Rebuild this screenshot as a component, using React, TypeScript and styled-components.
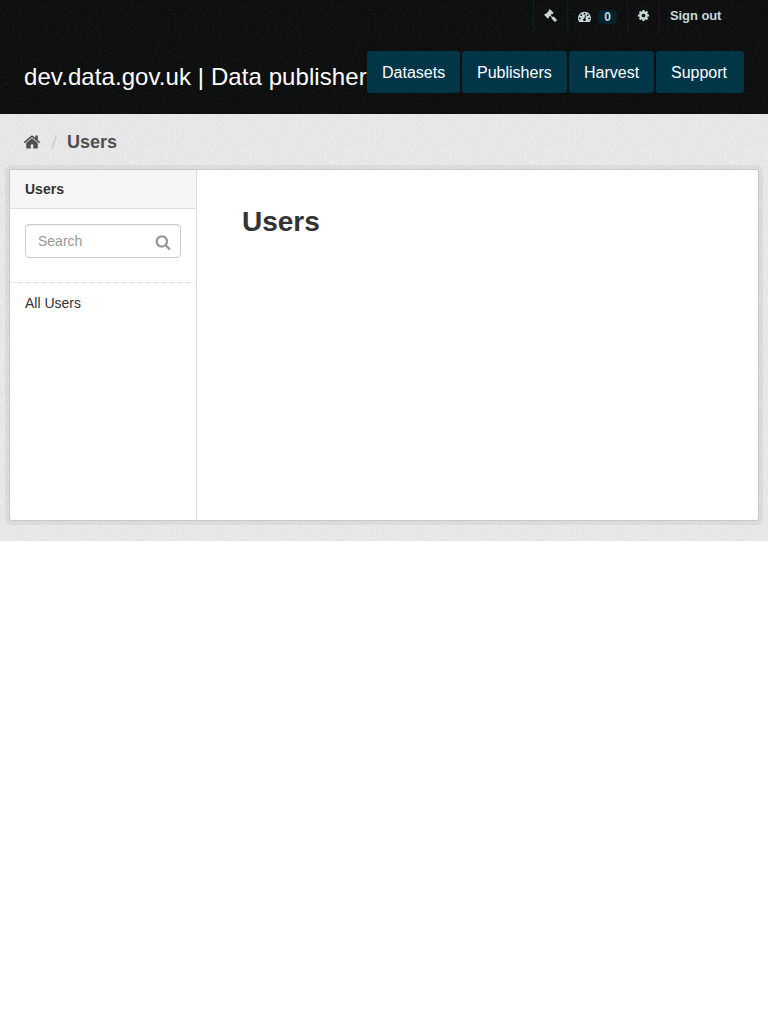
import React from "react";
import styled, { createGlobalStyle } from "styled-components";

const GlobalStyle = createGlobalStyle`
  * { box-sizing: border-box; }
  body {
    margin: 0;
    background: #fff;
    color: #333;
    font: 14px/20px "Helvetica Neue", "Liberation Sans", Arial, sans-serif;
    -webkit-font-smoothing: antialiased;
  }
  a { color: inherit; text-decoration: none; }
`;

const grain = (tone: number, alpha: number) =>
  `url("data:image/svg+xml,${encodeURIComponent(
    `<svg xmlns='http://www.w3.org/2000/svg' width='100' height='100'><filter id='n' x='0' y='0' width='100%' height='100%'><feTurbulence type='fractalNoise' baseFrequency='0.6' numOctaves='2' seed='4' stitchTiles='stitch'/><feColorMatrix values='0 0 0 0 ${tone} 0 0 0 0 ${tone} 0 0 0 0 ${tone} ${alpha} 0 0 0 ${-alpha * 0.38}'/></filter><rect width='100' height='100' filter='url(#n)'/></svg>`
  )}")`;

const Masthead = styled.header`
  height: 114px;
  background: #0b0d0d ${grain(0.3, 0.2)};
  color: #fff;
`;

const AccountBar = styled.ul`
  display: flex;
  justify-content: flex-end;
  height: 31px;
  margin: 0;
  padding: 0 37px 0 0;
  list-style: none;
  color: #c6d7db;
  font-size: 13px;
  font-weight: bold;
  line-height: 31px;
`;

const AccountItem = styled.li<{ $width: number }>`
  display: flex;
  align-items: center;
  width: ${(p) => p.$width}px;
  padding-left: 10px;
  border-left: 1px solid #04222b;
  white-space: nowrap;
  letter-spacing: -0.08px;
`;

const Badge = styled.span`
  width: 19px;
  height: 14px;
  margin: 2px 0 0 7px;
  border-radius: 4px;
  background: #00232e;
  font-size: 12px;
  line-height: 14px;
  text-align: center;
`;

const BrandRow = styled.div`
  display: flex;
  justify-content: space-between;
  padding: 20px 24px 0;
`;

const SiteTitle = styled.h1`
  width: 343px;
  margin: 11px 0 0;
  font-size: 24px;
  font-weight: normal;
  line-height: 30px;
  letter-spacing: 0.08px;
  white-space: nowrap;
`;

const MainNav = styled.nav`
  display: flex;
  gap: 2px;
`;

const NavLink = styled.a<{ $width: number }>`
  width: ${(p) => p.$width}px;
  height: 42px;
  padding-left: 15px;
  border-radius: 3px;
  background: #003647;
  font-size: 16px;
  line-height: 43px;
`;

const Main = styled.main`
  height: 427px;
  padding: 18px 10px 0;
  background: #e4e4e4 ${grain(1, 0.9)};
`;

const Breadcrumb = styled.div`
  display: flex;
  align-items: center;
  height: 20px;
  margin-bottom: 18px;
  padding-left: 13px;
  color: #505050;
  font-size: 18px;
  font-weight: bold;
`;

const Slash = styled.svg`
  width: 6px;
  height: 14px;
  margin: 0 10px 0 10px;
  fill: none;
  stroke: #ccc;
  stroke-width: 1.5;
`;

const Panel = styled.div`
  display: flex;
  height: 350px;
  border-radius: 2px;
  background: #fff;
  box-shadow: 0 0 0 1px #c8c8c8, 0 0 0 5px rgba(0, 0, 0, 0.05);
`;

const Sidebar = styled.aside`
  width: 187px;
  border-right: 1px solid #ddd;
`;

const SidebarHeading = styled.h2`
  height: 39px;
  margin: 0;
  padding-left: 15px;
  border-bottom: 1px solid #ddd;
  border-radius: 2px 0 0 0;
  background: #f6f6f6;
  font-size: 14px;
  line-height: 38px;
`;

const SearchArea = styled.div`
  height: 74px;
  padding: 15px 15px 0;
  border-bottom: 1px dotted #ddd;
`;

const SearchField = styled.label`
  display: flex;
  align-items: center;
  justify-content: space-between;
  height: 34px;
  padding: 0 9px 0 12px;
  border: 1px solid #ccc;
  border-radius: 4px;
  box-shadow: inset 0 1px 1px rgba(0, 0, 0, 0.075);
  color: #999;
`;

const FilterLink = styled.a`
  display: block;
  padding: 10px 15px;
`;

const Content = styled.section`
  padding: 34px 45px;
`;

const PageTitle = styled.h1`
  margin: 0;
  font-size: 28px;
  line-height: 35px;
`;

const Glyph = styled.svg<{ $top?: number; $left?: number }>`
  flex: none;
  margin-top: ${(p) => p.$top ?? 0}px;
  margin-left: ${(p) => p.$left ?? 0}px;
  fill: currentColor;
`;

const icons = {
  home: "M1472 992v480q0 26-19 45t-45 19h-384v-384h-256v384h-384q-26 0-45-19t-19-45v-480q0-1 .5-3t.5-3l575-474 575 474q1 2 1 6zm223-69l-62 74q-8 9-21 11h-3q-13 0-21-7l-692-577-692 577q-12 8-24 7-13-2-21-11l-62-74q-8-10-7-23.5t11-21.5l719-599q32-26 76-26t76 26l244 204v-195q0-14 9-23t23-9h192q14 0 23 9t9 23v408l219 182q10 8 11 21.5t-7 23.5z",
  search: "M1216 832q0-185-131.5-316.5t-316.5-131.5-316.5 131.5-131.5 316.5 131.5 316.5 316.5 131.5 316.5-131.5 131.5-316.5zm512 832q0 52-38 90t-90 38q-54 0-90-38l-343-342q-179 124-399 124-143 0-273.5-55.5t-225-150-150-225-55.5-273.5 55.5-273.5 150-225 225-150 273.5-55.5 273.5 55.5 225 150 150 225 55.5 273.5q0 220-124 399l343 343q37 37 37 90z",
  cog: "M1152 896q0-106-75-181t-181-75-181 75-75 181 75 181 181 75 181-75 75-181zm512-109v222q0 12-8 23t-20 13l-185 28q-19 54-39 91 35 50 107 138 10 12 10 25t-9 23q-27 37-99 108t-94 71q-12 0-26-9l-138-108q-44 23-91 38-16 136-29 186-7 28-36 28h-222q-14 0-24.5-8.5t-11.5-21.5l-28-184q-49-16-90-37l-141 107q-10 9-25 9-14 0-25-11-126-114-165-168-7-10-7-23 0-12 8-23 15-21 51-66.5t54-70.5q-27-50-41-99l-183-27q-13-2-21-12.5t-8-23.5v-222q0-12 8-23t19-13l186-28q14-46 39-92-40-57-107-138-10-12-10-24 0-10 9-23 26-36 98.5-107.5t94.5-71.5q13 0 26 10l138 107q44-23 91-38 16-136 29-186 7-28 36-28h222q14 0 24.5 8.5t11.5 21.5l28 184q49 16 90 37l142-107q9-9 24-9 13 0 25 10 129 119 165 170 7 8 7 22 0 12-8 23-15 21-51 66.5t-54 70.5q26 50 41 98l183 28q13 2 21 12.5t8 23.5z",
  gavel: "M1771 1536q0 53-37 90l-107 108q-39 37-91 37-53 0-90-37l-363-364q-38-36-38-90 0-53 43-96l-256-256-126 126q-14 14-34 14t-34-14q2 2 12.5 12t12.5 13 10 11.5 10 13.5 6 13.5 5.5 16.5 1.5 18q0 38-28 68-3 3-16.5 18t-19 20.5-18.5 16.5-22 15.5-22 9-26 4.5q-40 0-68-28l-408-408q-28-28-28-68 0-13 4.5-26t9-22 15.5-22 16.5-18.5 20.5-19 18-16.5q30-28 68-28 10 0 18 1.5t16.5 5.5 13.5 6 13.5 10 11.5 10 13 12.5 12 12.5q-14-14-14-34t14-34l348-348q14-14 34-14t34 14q-2-2-12.5-12t-12.5-13-10-11.5-10-13.5-6-13.5-5.5-16.5-1.5-18q0-38 28-68 3-3 16.5-18t19-20.5 18.5-16.5 22-15.5 22-9 26-4.5q40 0 68 28l408 408q28 28 28 68 0 13-4.5 26t-9 22-15.5 22-16.5 18.5-20.5 19-18 16.5q-30 28-68 28-10 0-18-1.5t-16.5-5.5-13.5-6-13.5-10-11.5-10-13-12.5-12-12.5q14 14 14 34t-14 34l-126 126 256 256q43-43 96-43 52 0 91 37l363 363q37 39 37 91z",
  gauge: "M384 1152q0-53-37.5-90.5t-90.5-37.5-90.5 37.5-37.5 90.5 37.5 90.5 90.5 37.5 90.5-37.5 37.5-90.5zm192-448q0-53-37.5-90.5t-90.5-37.5-90.5 37.5-37.5 90.5 37.5 90.5 90.5 37.5 90.5-37.5 37.5-90.5zm428 481l101-382q6-26-7.5-48.5t-38.5-29.5-48 6.5-30 39.5l-101 382q-60 5-107 43.5t-63 98.5q-20 77 20 146t117 89 146-20 89-117q16-60-6-117t-72-91zm660-33q0-53-37.5-90.5t-90.5-37.5-90.5 37.5-37.5 90.5 37.5 90.5 90.5 37.5 90.5-37.5 37.5-90.5zm-640-640q0-53-37.5-90.5t-90.5-37.5-90.5 37.5-37.5 90.5 37.5 90.5 90.5 37.5 90.5-37.5 37.5-90.5zm448 192q0-53-37.5-90.5t-90.5-37.5-90.5 37.5-37.5 90.5 37.5 90.5 90.5 37.5 90.5-37.5 37.5-90.5zm320 448q0 261-141 483-19 29-54 29h-1402q-35 0-54-29-141-221-141-483 0-182 71-348t191-286 286-191 348-71 348 71 286 191 191 286 71 348z",
};

type IconProps = { name: keyof typeof icons; size: number; top?: number; left?: number };

function Icon({ name, size, top, left }: IconProps) {
  return (
    <Glyph viewBox="0 0 1792 1792" width={size} height={size} $top={top} $left={left} aria-hidden>
      <path d={icons[name]} />
    </Glyph>
  );
}

const navItems = [
  { label: "Datasets", width: 93 },
  { label: "Publishers", width: 105 },
  { label: "Harvest", width: 85 },
  { label: "Support", width: 88 },
];

export default function App() {
  return (
    <>
      <GlobalStyle />
      <Masthead>
        <AccountBar>
          <AccountItem $width={34}><Icon name="gavel" size={13} /></AccountItem>
          <AccountItem $width={60}><Icon name="gauge" size={13} top={1} /><Badge>0</Badge></AccountItem>
          <AccountItem $width={32}><Icon name="cog" size={13} left={-1} /></AccountItem>
          <AccountItem $width={72}>Sign out</AccountItem>
        </AccountBar>
        <BrandRow>
          <SiteTitle>dev.data.gov.uk | Data publisher</SiteTitle>
          <MainNav>
            {navItems.map((item) => (
              <NavLink key={item.label} href="#" $width={item.width}>{item.label}</NavLink>
            ))}
          </MainNav>
        </BrandRow>
      </Masthead>
      <Main>
        <Breadcrumb>
          <Icon name="home" size={18} />
          <Slash viewBox="0 0 6 14" aria-hidden><path d="M5.3 0.3L0.7 13.7" /></Slash>
          <span>Users</span>
        </Breadcrumb>
        <Panel>
          <Sidebar>
            <SidebarHeading>Users</SidebarHeading>
            <SearchArea>
              <SearchField><span>Search</span><Icon name="search" size={16} top={2} /></SearchField>
            </SearchArea>
            <FilterLink href="#">All Users</FilterLink>
          </Sidebar>
          <Content>
            <PageTitle>Users</PageTitle>
          </Content>
        </Panel>
      </Main>
    </>
  );
}
